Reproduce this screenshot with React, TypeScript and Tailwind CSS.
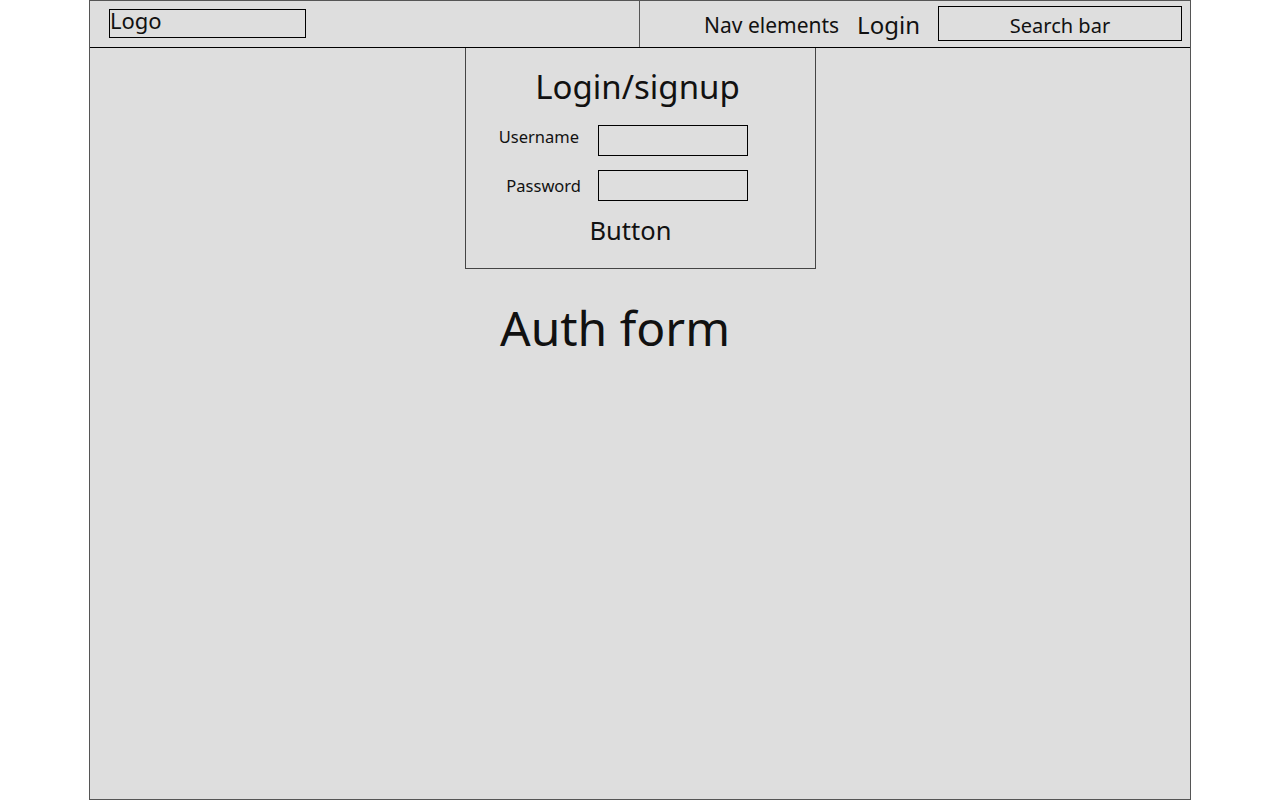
import React from "react";

const font = { fontFamily: '"Noto Sans", "Open Sans", sans-serif' };

const Header = () => (
  <header className="flex h-[47px] border-b border-black">
    <div className="w-[550px] border-r border-[#555] pl-[19px] pt-[8px]">
      <div className="w-[197px] h-[29px] border border-black text-[22px] leading-[20px] text-[#111]">
        Logo
      </div>
    </div>
    <div className="flex flex-1 items-center justify-end pr-[8px] text-[#111]">
      <span className="text-[21px] mr-[18px] mt-[4px]">Nav elements</span>
      <span className="text-[24px] mr-[18px] mt-[2px]">Login</span>
      <div className="w-[244px] h-[35px] mt-[-1px] border border-black flex items-center justify-center text-[20px] pt-[4px]">
        Search bar
      </div>
    </div>
  </header>
);

const AuthForm = () => (
  <div className="ml-[375px] w-[351px] h-[221px] border-x border-b border-[#444] flex flex-col text-[#111]">
    <h1 className="text-[33px] mt-[16px] leading-[46px] text-center ml-[-6px]">Login/signup</h1>
    <div className="mt-[15px] flex items-center">
      <label className="w-[132px] text-[16.5px] text-right pr-[19px] mt-[-6px]">Username</label>
      <div className="w-[150px] h-[31px] border border-black" />
    </div>
    <div className="mt-[14px] flex items-center">
      <label className="w-[132px] text-[16.5px] text-right pr-[17px] mt-[2px]">Password</label>
      <div className="w-[150px] h-[31px] border border-black" />
    </div>
    <div className="mt-[11px] text-[25.5px] leading-[36px] text-center ml-[-20px]">Button</div>
  </div>
);

export default function App() {
  return (
    <div className="bg-white min-h-[800px]" style={font}>
      <div className="ml-[89px] w-[1102px] h-[800px] border-x border-t border-b border-[#555] bg-[#dedede]">
        <Header />
        <AuthForm />
        <div className="mt-[26px] text-center text-[48px] leading-[66px] text-[#111] ml-[-50px]">
          Auth form
        </div>
      </div>
    </div>
  );
}
